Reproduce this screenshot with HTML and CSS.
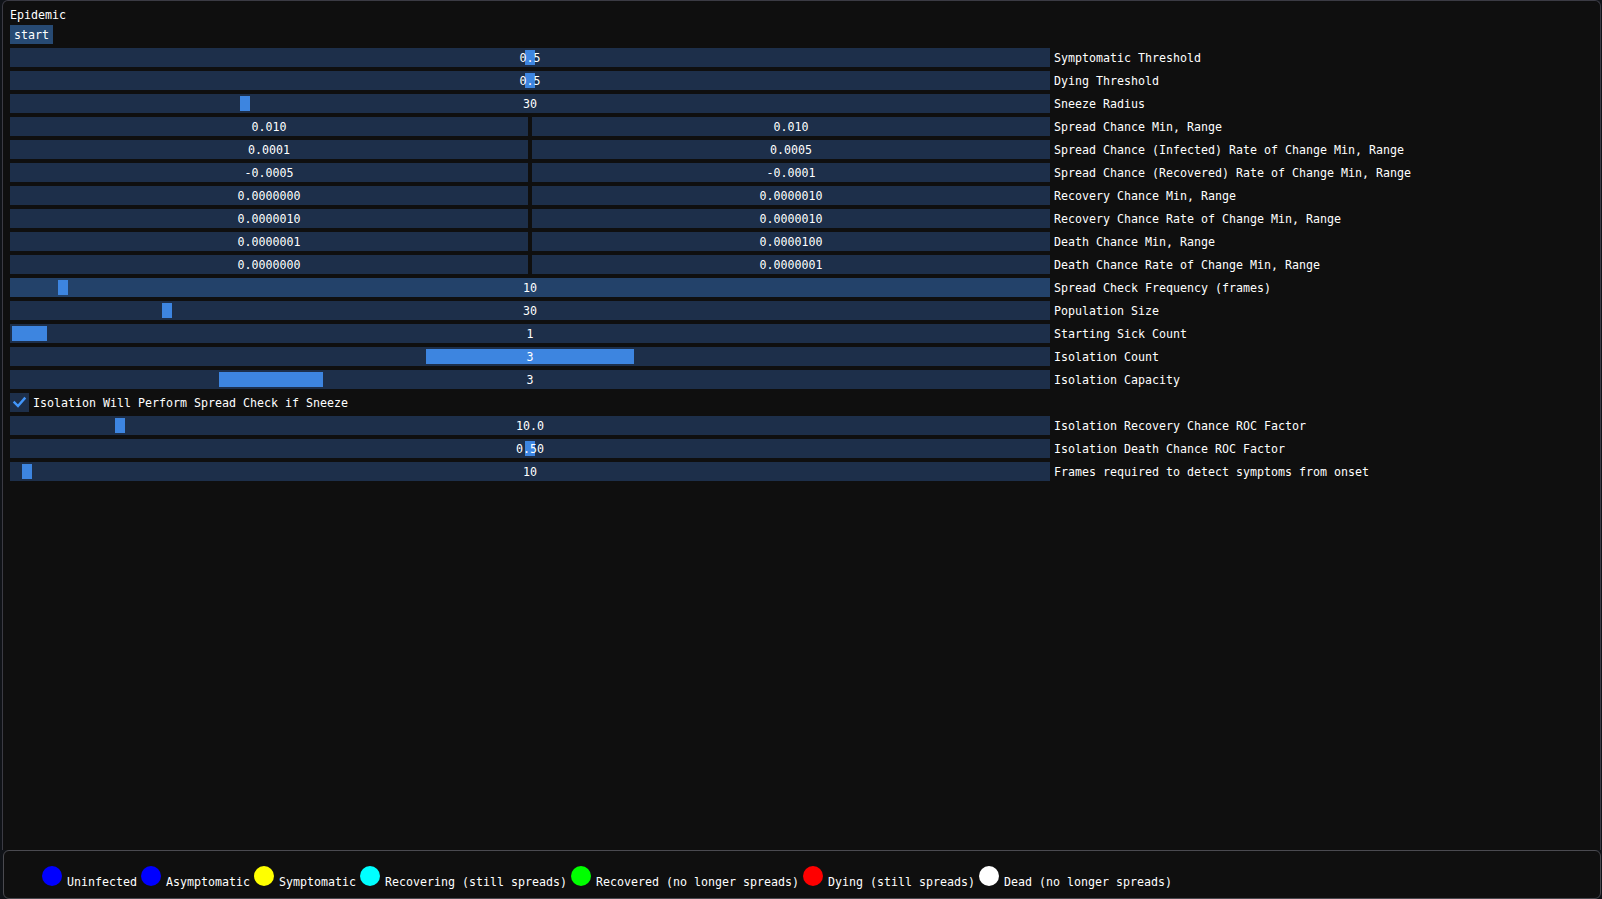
FILE: index.html
```html
<!DOCTYPE html>
<html>
<head>
<meta charset="utf-8">
<title>Epidemic</title>
<link rel="stylesheet" href="styles.css">
</head>
<body>
<div class="app">
  <div class="window">
    <div class="text-line">Epidemic</div>
    <div class="line"><span class="btn">start</span></div>

    <div class="row">
      <div class="slider"><span class="grab" style="left:515px;width:10px"></span><span class="val">0.5</span></div>
      <span class="label">Symptomatic Threshold</span>
    </div>
    <div class="row">
      <div class="slider"><span class="grab" style="left:515px;width:10px"></span><span class="val">0.5</span></div>
      <span class="label">Dying Threshold</span>
    </div>
    <div class="row">
      <div class="slider"><span class="grab" style="left:230px;width:10px"></span><span class="val">30</span></div>
      <span class="label">Sneeze Radius</span>
    </div>
    <div class="row">
      <div class="pair"><div class="frame"><span class="val">0.010</span></div><div class="frame"><span class="val">0.010</span></div></div>
      <span class="label">Spread Chance Min, Range</span>
    </div>
    <div class="row">
      <div class="pair"><div class="frame"><span class="val">0.0001</span></div><div class="frame"><span class="val">0.0005</span></div></div>
      <span class="label">Spread Chance (Infected) Rate of Change Min, Range</span>
    </div>
    <div class="row">
      <div class="pair"><div class="frame"><span class="val">-0.0005</span></div><div class="frame"><span class="val">-0.0001</span></div></div>
      <span class="label">Spread Chance (Recovered) Rate of Change Min, Range</span>
    </div>
    <div class="row">
      <div class="pair"><div class="frame"><span class="val">0.0000000</span></div><div class="frame"><span class="val">0.0000010</span></div></div>
      <span class="label">Recovery Chance Min, Range</span>
    </div>
    <div class="row">
      <div class="pair"><div class="frame"><span class="val">0.0000010</span></div><div class="frame"><span class="val">0.0000010</span></div></div>
      <span class="label">Recovery Chance Rate of Change Min, Range</span>
    </div>
    <div class="row">
      <div class="pair"><div class="frame"><span class="val">0.0000001</span></div><div class="frame"><span class="val">0.0000100</span></div></div>
      <span class="label">Death Chance Min, Range</span>
    </div>
    <div class="row">
      <div class="pair"><div class="frame"><span class="val">0.0000000</span></div><div class="frame"><span class="val">0.0000001</span></div></div>
      <span class="label">Death Chance Rate of Change Min, Range</span>
    </div>
    <div class="row">
      <div class="slider hovered"><span class="grab" style="left:48px;width:10px"></span><span class="val">10</span></div>
      <span class="label">Spread Check Frequency (frames)</span>
    </div>
    <div class="row">
      <div class="slider"><span class="grab" style="left:152px;width:10px"></span><span class="val">30</span></div>
      <span class="label">Population Size</span>
    </div>
    <div class="row">
      <div class="slider"><span class="grab" style="left:2px;width:35px"></span><span class="val">1</span></div>
      <span class="label">Starting Sick Count</span>
    </div>
    <div class="row">
      <div class="slider"><span class="grab" style="left:416px;width:208px"></span><span class="val">3</span></div>
      <span class="label">Isolation Count</span>
    </div>
    <div class="row">
      <div class="slider"><span class="grab" style="left:209px;width:104px"></span><span class="val">3</span></div>
      <span class="label">Isolation Capacity</span>
    </div>
    <div class="row">
      <span class="checkbox"><svg width="19" height="19" viewBox="0 0 19 19"><polyline points="4.5,9.5 8,13 14.5,5.5" fill="none" stroke="#4296fa" stroke-width="2.4" stroke-linecap="square"/></svg></span>
      <span class="check-label">Isolation Will Perform Spread Check if Sneeze</span>
    </div>
    <div class="row">
      <div class="slider"><span class="grab" style="left:105px;width:10px"></span><span class="val">10.0</span></div>
      <span class="label">Isolation Recovery Chance ROC Factor</span>
    </div>
    <div class="row">
      <div class="slider"><span class="grab" style="left:515px;width:10px"></span><span class="val">0.50</span></div>
      <span class="label">Isolation Death Chance ROC Factor</span>
    </div>
    <div class="row">
      <div class="slider"><span class="grab" style="left:12px;width:10px"></span><span class="val">10</span></div>
      <span class="label">Frames required to detect symptoms from onset</span>
    </div>
  </div>

  <div class="legend">
    <span class="dot blue"></span><span class="legend-text">Uninfected</span>
    <span class="dot blue"></span><span class="legend-text">Asymptomatic</span>
    <span class="dot yellow"></span><span class="legend-text">Symptomatic</span>
    <span class="dot cyan"></span><span class="legend-text">Recovering (still spreads)</span>
    <span class="dot green"></span><span class="legend-text">Recovered (no longer spreads)</span>
    <span class="dot red"></span><span class="legend-text">Dying (still spreads)</span>
    <span class="dot white"></span><span class="legend-text">Dead (no longer spreads)</span>
  </div>
</div>
</body>
</html>
```

FILE: styles.css
```css
html, body {
  margin: 0;
  padding: 0;
  background: #0f0f0f;
}

body {
  width: 1602px;
  height: 899px;
  overflow: hidden;
  font-family: "DejaVu Sans Mono", "Liberation Mono", monospace;
  font-size: 11.63px;
  color: #ffffff;
}

.app {
  display: flex;
  flex-direction: column;
  height: 899px;
  background: #101318;
}

.window {
  margin-left: 2px;
  width: 1599px;
  height: 850px;
  box-sizing: border-box;
  border: 1px solid #3b3b44;
  border-bottom: none;
  border-radius: 6px 6px 0 0;
  background: #0f0f0f;
  padding: 7px 7px 0 7px;
  display: flex;
  flex-direction: column;
  gap: 4px;
}

.text-line {
  height: 13px;
  line-height: 15px;
  white-space: pre;
}

.line {
  display: flex;
  height: 19px;
}

.btn {
  display: block;
  height: 19px;
  box-sizing: border-box;
  padding: 2px 4px 0 4px;
  line-height: 17px;
  background: #274a73;
  white-space: pre;
}

.row {
  display: flex;
  align-items: center;
  height: 19px;
  gap: 4px;
}

.slider {
  position: relative;
  width: 1040px;
  height: 19px;
  background: #1d2f4a;
  flex: none;
}

.slider.hovered {
  background: #23426a;
}

.grab {
  position: absolute;
  top: 2px;
  height: 15px;
  background: #3d85e0;
}

.val {
  position: relative;
  display: block;
  height: 19px;
  box-sizing: border-box;
  padding-top: 2px;
  line-height: 17px;
  text-align: center;
  white-space: pre;
}

.pair {
  display: flex;
  gap: 4px;
  width: 1040px;
  flex: none;
}

.frame {
  width: 518px;
  height: 19px;
  background: #1d2f4a;
}

.label,
.check-label {
  display: block;
  height: 19px;
  box-sizing: border-box;
  padding-top: 2px;
  line-height: 17px;
  white-space: pre;
}

.checkbox {
  display: block;
  width: 19px;
  height: 19px;
  background: #1d2f4a;
  flex: none;
}

.checkbox svg {
  display: block;
}

.legend {
  margin-left: 3px;
  width: 1598px;
  height: 49px;
  box-sizing: border-box;
  border: 1px solid #4a4a50;
  border-radius: 6px;
  background: #0f0f0f;
  padding: 15px 0 0 38px;
  display: flex;
  align-items: flex-start;
}

.dot {
  display: block;
  width: 20px;
  height: 20px;
  border-radius: 50%;
  margin-right: 5px;
  flex: none;
}

.legend-text {
  display: block;
  margin-top: 10px;
  line-height: 13px;
  margin-right: 4px;
  white-space: pre;
}

.blue { background: #0000ff; }
.yellow { background: #ffff00; }
.cyan { background: #00ffff; }
.green { background: #00ff00; }
.red { background: #ff0000; }
.white { background: #ffffff; }
```
